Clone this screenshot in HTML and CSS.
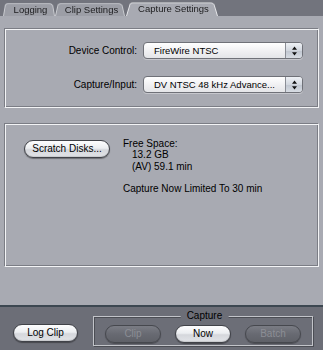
FILE: index.html
```html
<!DOCTYPE html>
<html>
<head>
    <title>Capture Settings</title>
    <link rel="stylesheet" href="styles.css">
</head>
<body>
<div class="window">
    <div class="tabs">
        <div class="tab logging">Logging</div>
        <div class="tab clip">Clip Settings</div>
        <div class="tab active">Capture Settings</div>
    </div>

    <div class="panel">
        <div class="box settings">
            <label>Device Control:</label>
            <div class="popup">
                <span>FireWire NTSC</span>
                <i class="arrows"><svg width="7" height="10" viewBox="0 0 7 10"><path d="M3.5 0.5 L6 3.8 L1 3.8 Z M3.5 9.5 L6 6.2 L1 6.2 Z" fill="#111"/></svg></i>
            </div>
            <label>Capture/Input:</label>
            <div class="popup">
                <span>DV NTSC 48 kHz Advance...</span>
                <i class="arrows"><svg width="7" height="10" viewBox="0 0 7 10"><path d="M3.5 0.5 L6 3.8 L1 3.8 Z M3.5 9.5 L6 6.2 L1 6.2 Z" fill="#111"/></svg></i>
            </div>
        </div>

        <div class="box disks">
            <button class="pill scratch">Scratch Disks...</button>
            <div class="space">
                <div>Free Space:</div>
                <div class="indent">13.2 GB</div>
                <div class="indent">(AV) 59.1 min</div>
                <div class="limit">Capture Now Limited To 30 min</div>
            </div>
        </div>
    </div>

    <div class="footer">
        <button class="pill log">Log Clip</button>
        <div class="capture">
            <span class="caption">Capture</span>
            <button class="pill off">Clip</button>
            <button class="pill">Now</button>
            <button class="pill off">Batch</button>
        </div>
    </div>
</div>
</body>
</html>
```

FILE: styles.css
```css
html, body {
    margin: 0;
    padding: 0;
    background: #6c6e77;
}
body {
    font-family: "Liberation Sans", Arial, sans-serif;
    font-size: 10px;
    color: #000;
}
.window {
    width: 323px;
    height: 350px;
    display: flex;
    flex-direction: column;
}

/* tabs */
.tabs {
    height: 16px;
    background: #72747d;
    display: flex;
    align-items: flex-end;
    padding-left: 3px;
}
.tab {
    position: relative;
    z-index: 0;
    height: 14px;
    line-height: 15px;
    font-size: 9.5px;
    text-align: center;
    color: #1c1c1e;
    box-sizing: border-box;
    padding-left: 3px;
}
.tab.logging {
    width: 52px;
}
.tab.clip {
    width: 70px;
}
.tab::before {
    content: "";
    position: absolute;
    top: 0;
    left: 0;
    right: 0;
    bottom: 0;
    z-index: -1;
    background: #9c9ea6;
    border: 1px solid #c9cbd0;
    border-bottom: 0;
    border-radius: 3px 4px 0 0;
    transform: perspective(24px) rotateX(9deg);
    transform-origin: bottom;
}
.tab.active {
    width: 92px;
    height: 15px;
    margin-left: 1px;
}
.tab.active::before {
    background: #a8aab2;
    border-color: #e6e7ea;
}

/* main panel */
.panel {
    flex: 1;
    background: #a8aab2;
    padding: 12px 4px 0 4px;
}
.box {
    border: 1px solid;
    border-color: #7b7d85 #f3f4f6 #f3f4f6 #7b7d85;
    box-shadow: inset 1px 1px 0 #f3f4f6, inset -1px -1px 0 #7b7d85;
    box-sizing: border-box;
}
.settings {
    height: 80px;
    padding-top: 13px;
    display: grid;
    grid-template-columns: 132px 160px;
    grid-auto-rows: 17px;
    column-gap: 6px;
    row-gap: 17px;
}
.settings label {
    text-align: right;
    line-height: 17px;
}
.popup {
    display: flex;
    border: 1px solid #6f7178;
    border-radius: 4px;
    background: linear-gradient(#ffffff, #f1f1f3 50%, #e4e5e8);
    box-shadow: 0 1px 0 rgba(255, 255, 255, 0.35);
    overflow: hidden;
    box-sizing: border-box;
}
.popup span {
    flex: 1;
    padding-left: 10px;
    font-size: 9.5px;
    line-height: 15px;
    white-space: nowrap;
}
.arrows {
    width: 16px;
    border-left: 1px solid #8a8d95;
    background: linear-gradient(#eef1f5, #d2d7df 50%, #bfc5cf 51%, #d7dce3);
    display: flex;
    align-items: center;
    justify-content: center;
}

.disks {
    margin-top: 15px;
    height: 144px;
    padding: 16px 0 0 19px;
    display: flex;
    align-items: flex-start;
}
.space {
    margin: -2px 0 0 13px;
    line-height: 11.3px;
}
.indent {
    padding-left: 9px;
}
.limit {
    margin-top: 11.3px;
}

/* pill buttons */
.pill {
    height: 18px;
    padding: 0;
    border: 1px solid #404248;
    border-radius: 9px;
    background: linear-gradient(#fdfdfe, #eceef1 45%, #d5d7dc 55%, #e2e4e8);
    box-shadow: 0 1px 1px rgba(0, 0, 0, 0.35), inset 0 -1px 1px rgba(0, 0, 0, 0.12);
    font-family: inherit;
    font-size: 10px;
    color: #000;
    line-height: 16px;
}
.scratch {
    width: 86px;
}
.pill.off {
    border-color: #46484e;
    background: linear-gradient(#7a7c84, #686a72 50%, #5f6168);
    color: #8c8e95;
    box-shadow: 0 1px 1px rgba(0, 0, 0, 0.3);
}

/* bottom bar */
.footer {
    height: 45px;
    box-sizing: border-box;
    border-top: 2px solid #3c4751;
    background: #6c6e77;
    display: flex;
    align-items: flex-start;
    padding: 9px 0 0 13px;
}
.log {
    width: 65px;
    margin-top: 8px;
}
.capture {
    position: relative;
    margin-left: 15px;
    width: 220px;
    height: 30px;
    box-sizing: border-box;
    border: 1px solid #c2c4c9;
    box-shadow: inset 1px 1px 0 #4b4d54, 1px 1px 0 #4b4d54;
    display: flex;
    align-items: flex-start;
    gap: 14px;
    padding: 8px 0 0 11px;
}
.capture .pill {
    width: 56px;
}
.caption {
    position: absolute;
    top: -7px;
    left: 50%;
    transform: translateX(-47%);
    padding: 0 6px;
    background: #6c6e77;
    line-height: 12px;
}
```
